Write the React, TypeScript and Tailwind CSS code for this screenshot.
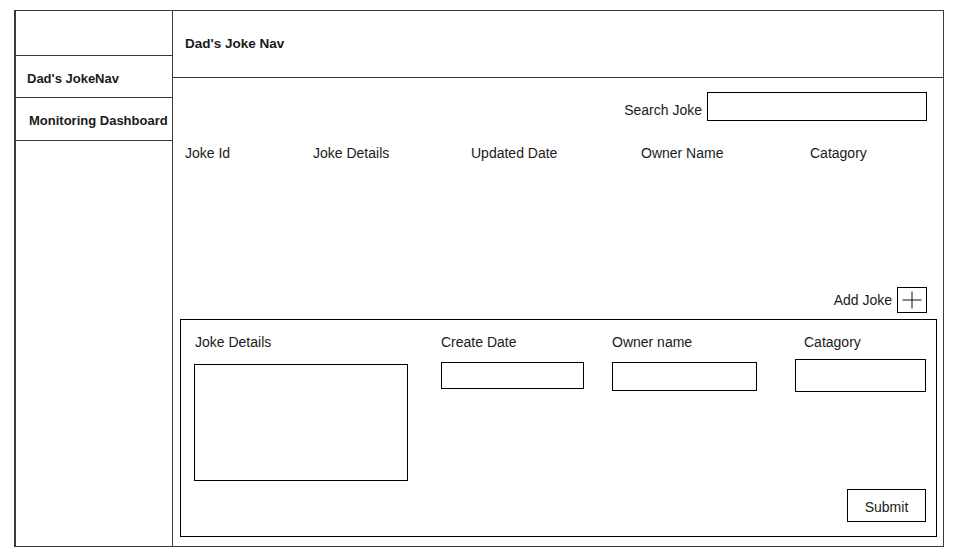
import React from "react";

const columns = [
  { label: "Joke Id", w: "w-[128px]" },
  { label: "Joke Details", w: "w-[158px]" },
  { label: "Updated Date", w: "w-[170px]" },
  { label: "Owner Name", w: "w-[169px]" },
  { label: "Catagory", w: "w-[100px]" },
];

export default function App() {
  return (
    <div className="w-[956px] h-[557px] bg-white pt-[10px] pl-[14px] text-[#1a1a1a] font-['Liberation_Sans',Arial,sans-serif]">
      <div className="flex w-[930px] h-[537px] border border-l-2 border-[#3a3a3a]">
        {/* sidebar */}
        <aside className="w-[159px] h-full border-r border-[#3a3a3a] flex flex-col">
          <div className="h-[45px] border-b border-[#3a3a3a]" />
          <div className="h-[42px] border-b border-[#3a3a3a] flex items-center pt-[5px] pl-[11px] text-[13px] font-bold">
            Dad's JokeNav
          </div>
          <div className="h-[43px] border-b border-[#3a3a3a] flex items-center pt-[4px] pl-[13px] text-[13px] font-bold">
            Monitoring Dashboard
          </div>
        </aside>

        {/* main */}
        <main className="flex-1 flex flex-col">
          <header className="h-[67px] border-b border-[#3a3a3a] flex items-center pl-[12px] text-[13.5px] font-bold">
            Dad's Joke Nav
          </header>

          <div className="flex items-start justify-end gap-[5px] mt-[14px] pr-[16px]">
            <span className="text-[14px] leading-[18px] mt-[9px]">Search Joke</span>
            <div className="w-[220px] h-[29px] border border-black" />
          </div>

          <div className="flex pl-[12px] mt-[23px] text-[14px] leading-[18px]">
            {columns.map((c) => (
              <span key={c.label} className={c.w}>
                {c.label}
              </span>
            ))}
          </div>

          <div className="flex items-center justify-end gap-[5px] mt-[125px] pr-[16px]">
            <span className="text-[14px]">Add Joke</span>
            <div className="w-[30px] h-[26px] border border-black flex items-center justify-center">
              <svg width="20" height="18" viewBox="0 0 20 18">
                <path d="M10 0.5v17M0.5 9h19" stroke="#111" strokeWidth="1" fill="none" />
              </svg>
            </div>
          </div>

          <section className="flex-1 ml-[7px] mr-[6px] mt-[6px] mb-[9px] border border-black flex flex-col pl-[13px] pr-[10px] pt-[13px] pb-[14px] text-[14px]">
            <div className="flex items-start">
              <div className="flex flex-col w-[214px]">
                <span className="leading-[18px] pl-[1px]">Joke Details</span>
                <div className="mt-[13px] h-[117px] border border-black" />
              </div>
              <div className="flex flex-col w-[143px] ml-[33px]">
                <span className="leading-[18px]">Create Date</span>
                <div className="mt-[11px] h-[27px] border border-black" />
              </div>
              <div className="flex flex-col w-[145px] ml-[28px]">
                <span className="leading-[18px]">Owner name</span>
                <div className="mt-[11px] h-[29px] border border-black" />
              </div>
              <div className="flex flex-col w-[131px] ml-[38px]">
                <span className="leading-[18px] pl-[9px]">Catagory</span>
                <div className="mt-[8px] h-[33px] border border-black" />
              </div>
            </div>
            <div className="flex-1" />
            <div className="flex justify-end">
              <button className="w-[79px] h-[33px] border border-black bg-white text-[14px] flex items-center justify-center pt-[3px]">
                Submit
              </button>
            </div>
          </section>
        </main>
      </div>
    </div>
  );
}
